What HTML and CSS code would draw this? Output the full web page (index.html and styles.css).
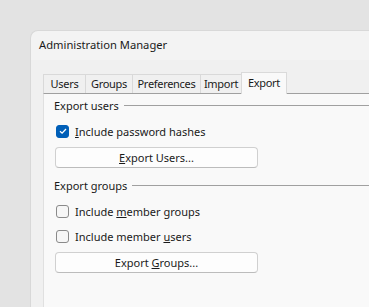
FILE: index.html
```html
<!DOCTYPE html>
<html lang="en">
<head>
    <meta charset="UTF-8">
    <title>Administration Manager</title>
    <link rel="stylesheet" href="styles.css">
</head>
<body>

    <div class="window">
        <div class="titlebar">Administration Manager</div>

        <div class="client">
            <ul class="tabs">
                <li class="tab-users">Users</li>
                <li class="tab-groups">Groups</li>
                <li class="tab-prefs">Preferences</li>
                <li class="tab-import">Import</li>
                <li class="tab-export active">Export</li>
            </ul>

            <div class="pane">
                <div class="group-title"><span>Export users</span></div>

                <label class="check">
                    <span class="box checked">
                        <svg width="10" height="10" viewBox="0 0 10 10"><path d="M2 5.2 L4.1 7.2 L8 3" fill="none" stroke="#fff" stroke-width="1.3"/></svg>
                    </span>
                    <span><u>I</u>nclude password hashes</span>
                </label>

                <button class="btn"><u>E</u>xport Users...</button>

                <div class="group-title"><span>Export groups</span></div>

                <label class="check">
                    <span class="box"></span>
                    <span>Include <u>m</u>ember groups</span>
                </label>

                <label class="check second">
                    <span class="box"></span>
                    <span>Include member <u>u</u>sers</span>
                </label>

                <button class="btn">Export <u>G</u>roups...</button>
            </div>
        </div>
    </div>

</body>
</html>
```

FILE: styles.css
```css
/* Reset and base styles */
* {
    margin: 0;
    padding: 0;
    box-sizing: border-box;
}

html {
    overflow: hidden;
}

body {
    background: #e3e3e3;
    font-family: "Noto Sans", "Segoe UI", Arial, sans-serif;
    font-size: 11px;
    color: #1a1a1a;
    padding: 30px 0 0 30px;
    height: 307px;
    overflow: hidden;
}

/* Window frame */
.window {
    background: #f3f3f3;
    border-radius: 8px 0 0 0;
    border-left: 1px solid #d8d8d8;
    border-top: 1px solid #d8d8d8;
    height: 277px;
}

.titlebar {
    height: 29px;
    padding: 6px 0 0 8px;
    font-size: 11.2px;
}

.client {
    background: #f0f0f0;
    height: 247px;
    padding: 12px 0 0 12px;
}

/* Tabs */
.tabs {
    display: flex;
    list-style: none;
    align-items: flex-end;
    height: 21px;
}

.tabs li {
    height: 19px;
    line-height: 18px;
    text-align: center;
    letter-spacing: -0.3px;
    background: #f0f0f0;
    border: 1px solid #d9d9d9;
    border-bottom: none;
    margin-right: -1px;
}

.tab-users { width: 43px; }
.tab-groups { width: 48px; }
.tab-prefs { width: 69px; }
.tab-import { width: 42px; }

.tabs li.active {
    width: 46px;
    height: 22px;
    background: #f9f9f9;
    line-height: 19px;
    position: relative;
    z-index: 1;
    margin-bottom: -1px;
    border-color: #dadada;
}

/* Tab page */
.pane {
    background: #f9f9f9;
    border-top: 1px solid #a0a0a0;
    border-left: 1px solid #e0e0e0;
    height: 220px;
    padding: 4px 0 0 10px;
}

.group-title {
    display: flex;
    align-items: center;
    height: 15px;
}

.group-title::after {
    content: "";
    flex: 1;
    border-top: 1px solid #a0a0a0;
    margin-left: 5px;
}

.check {
    display: flex;
    align-items: center;
    gap: 6px;
    margin: 10px 0 0 2px;
    height: 16px;
}

.check.second {
    margin-top: 9px;
}

.box {
    width: 13px;
    height: 13px;
    border: 1px solid #8a8a8a;
    border-radius: 3px;
    background: #f6f6f6;
    display: flex;
    align-items: center;
    justify-content: center;
}

.box.checked {
    background: #005fb8;
    border-color: #005fb8;
}

u {
    text-decoration-thickness: 1px;
}

.btn {
    display: block;
    width: 203px;
    height: 21px;
    margin: 8px 0 10px 1px;
    background: #fdfdfd;
    border: 1px solid #d0d0d0;
    border-bottom-color: #bcbcbc;
    border-radius: 4px;
    font-family: inherit;
    font-size: 11px;
    color: #1a1a1a;
}
```
